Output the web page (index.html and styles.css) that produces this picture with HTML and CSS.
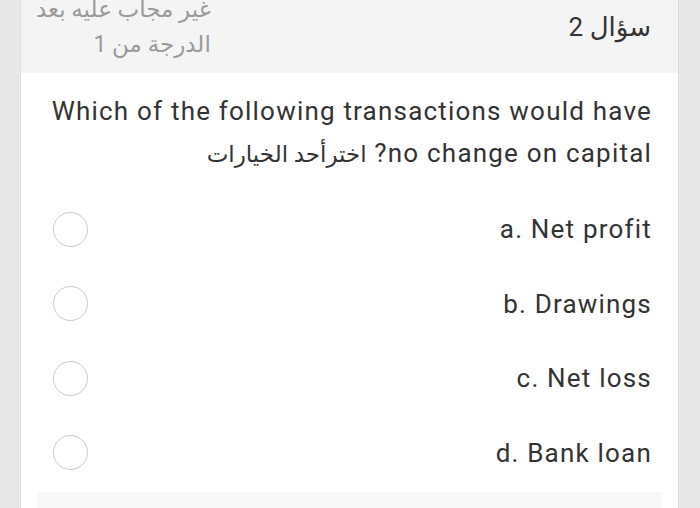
FILE: index.html
```html
<!DOCTYPE html>
<html lang="ar">
<head>
    <meta charset="UTF-8">
    <meta name="viewport" content="width=device-width, initial-scale=1.0">
    <title>سؤال 2</title>
    <link rel="stylesheet" href="styles.css">
</head>
<body>
    <div class="quiz-card">
        <div class="quiz-header">
            <div class="question-status">
                <div>غير مجاب عليه بعد</div>
                <div>الدرجة من 1</div>
            </div>
            <h2 class="question-number" dir="rtl">سؤال 2</h2>
        </div>

        <div class="question-text" dir="rtl">
            Which of the following transactions would have<br>no change on capital? <span class="hint">اخترأحد الخيارات</span>
        </div>

        <div class="options">
            <label class="option">
                <span class="radio"></span>
                <span class="option-label">a. Net profit</span>
            </label>
            <label class="option">
                <span class="radio"></span>
                <span class="option-label">b. Drawings</span>
            </label>
            <label class="option">
                <span class="radio"></span>
                <span class="option-label">c. Net loss</span>
            </label>
            <label class="option">
                <span class="radio"></span>
                <span class="option-label">d. Bank loan</span>
            </label>
        </div>

        <div class="quiz-footer"></div>
    </div>
</body>
</html>
```

FILE: styles.css
```css
* {
    margin: 0;
    padding: 0;
    box-sizing: border-box;
}

body {
    font-family: Roboto, "DejaVu Sans", sans-serif;
    background: #e8e8e8;
    color: #333;
    width: 700px;
    height: 508px;
    overflow: hidden;
}

.quiz-card {
    width: 659px;
    margin: -20px 0 0 20px;
    background: white;
    border-left: 1px solid #dcdcdc;
    border-right: 1px solid #dcdcdc;
    height: 560px;
}

.quiz-header {
    height: 93px;
    background: #f4f4f4;
    display: flex;
    justify-content: space-between;
    align-items: center;
    padding: 0 27px 0 15px;
}

.question-status {
    direction: rtl;
    text-align: right;
    font-size: 23px;
    line-height: 35px;
    color: #9a9a9a;
}

.question-number {
    font-size: 26px;
    font-weight: normal;
    color: #333;
}

.question-text {
    padding: 17px 26px 0 29px;
    font-size: 26px;
    line-height: 42px;
    letter-spacing: 1.2px;
    text-align: right;
}

.question-text .hint {
    font-size: 23px;
    letter-spacing: 0;
}

.options {
    margin-top: 16px;
    padding: 0 26px 0 32px;
}

.option {
    height: 74.5px;
    display: flex;
    justify-content: space-between;
    align-items: center;
}

.radio {
    width: 35px;
    height: 35px;
    border: 1.5px solid #c9c9c9;
    border-radius: 50%;
}

.option-label {
    font-size: 26px;
    letter-spacing: 1.2px;
    color: #333;
}

.quiz-footer {
    margin: 2px 16px 0 16px;
    height: 40px;
    background: #f8f8f8;
}
```
